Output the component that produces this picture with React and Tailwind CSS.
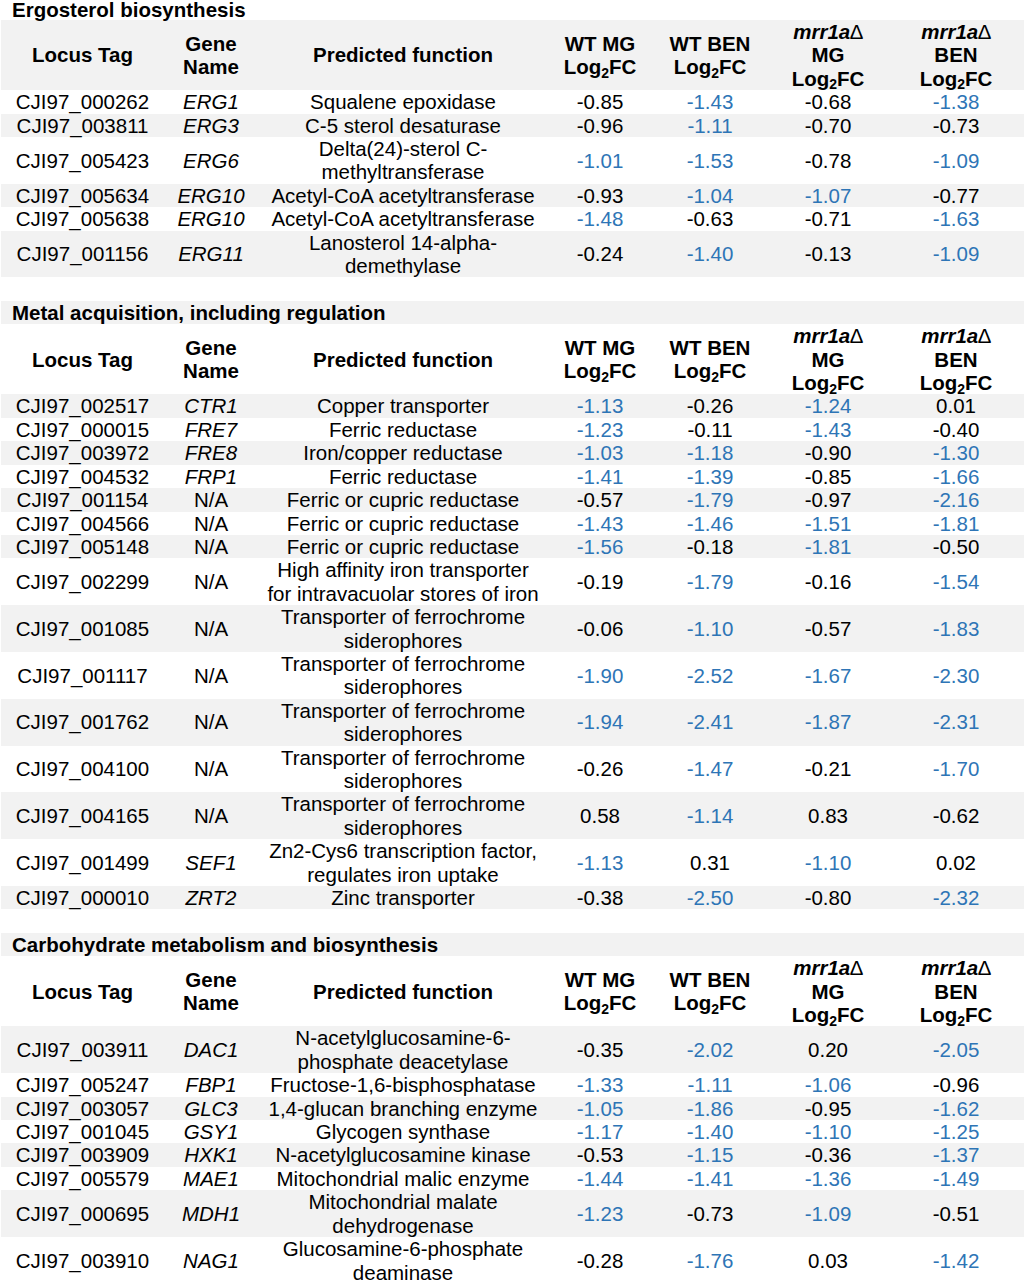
import React from 'react';

const sections = [
  {
    title: 'Ergosterol biosynthesis',
    rows: [
      ['CJI97_000262', 'ERG1', ['Squalene epoxidase'], '-0.85', '-1.43', '-0.68', '-1.38'],
      ['CJI97_003811', 'ERG3', ['C-5 sterol desaturase'], '-0.96', '-1.11', '-0.70', '-0.73'],
      ['CJI97_005423', 'ERG6', ['Delta(24)-sterol C-', 'methyltransferase'], '-1.01', '-1.53', '-0.78', '-1.09'],
      ['CJI97_005634', 'ERG10', ['Acetyl-CoA acetyltransferase'], '-0.93', '-1.04', '-1.07', '-0.77'],
      ['CJI97_005638', 'ERG10', ['Acetyl-CoA acetyltransferase'], '-1.48', '-0.63', '-0.71', '-1.63'],
      ['CJI97_001156', 'ERG11', ['Lanosterol 14-alpha-', 'demethylase'], '-0.24', '-1.40', '-0.13', '-1.09'],
    ],
  },
  {
    title: 'Metal acquisition, including regulation',
    rows: [
      ['CJI97_002517', 'CTR1', ['Copper transporter'], '-1.13', '-0.26', '-1.24', '0.01'],
      ['CJI97_000015', 'FRE7', ['Ferric reductase'], '-1.23', '-0.11', '-1.43', '-0.40'],
      ['CJI97_003972', 'FRE8', ['Iron/copper reductase'], '-1.03', '-1.18', '-0.90', '-1.30'],
      ['CJI97_004532', 'FRP1', ['Ferric reductase'], '-1.41', '-1.39', '-0.85', '-1.66'],
      ['CJI97_001154', null, ['Ferric or cupric reductase'], '-0.57', '-1.79', '-0.97', '-2.16'],
      ['CJI97_004566', null, ['Ferric or cupric reductase'], '-1.43', '-1.46', '-1.51', '-1.81'],
      ['CJI97_005148', null, ['Ferric or cupric reductase'], '-1.56', '-0.18', '-1.81', '-0.50'],
      ['CJI97_002299', null, ['High affinity iron transporter', 'for intravacuolar stores of iron'], '-0.19', '-1.79', '-0.16', '-1.54'],
      ['CJI97_001085', null, ['Transporter of ferrochrome', 'siderophores'], '-0.06', '-1.10', '-0.57', '-1.83'],
      ['CJI97_001117', null, ['Transporter of ferrochrome', 'siderophores'], '-1.90', '-2.52', '-1.67', '-2.30'],
      ['CJI97_001762', null, ['Transporter of ferrochrome', 'siderophores'], '-1.94', '-2.41', '-1.87', '-2.31'],
      ['CJI97_004100', null, ['Transporter of ferrochrome', 'siderophores'], '-0.26', '-1.47', '-0.21', '-1.70'],
      ['CJI97_004165', null, ['Transporter of ferrochrome', 'siderophores'], '0.58', '-1.14', '0.83', '-0.62'],
      ['CJI97_001499', 'SEF1', ['Zn2-Cys6 transcription factor,', 'regulates iron uptake'], '-1.13', '0.31', '-1.10', '0.02'],
      ['CJI97_000010', 'ZRT2', ['Zinc transporter'], '-0.38', '-2.50', '-0.80', '-2.32'],
    ],
  },
  {
    title: 'Carbohydrate metabolism and biosynthesis',
    rows: [
      ['CJI97_003911', 'DAC1', ['N-acetylglucosamine-6-', 'phosphate deacetylase'], '-0.35', '-2.02', '0.20', '-2.05'],
      ['CJI97_005247', 'FBP1', ['Fructose-1,6-bisphosphatase'], '-1.33', '-1.11', '-1.06', '-0.96'],
      ['CJI97_003057', 'GLC3', ['1,4-glucan branching enzyme'], '-1.05', '-1.86', '-0.95', '-1.62'],
      ['CJI97_001045', 'GSY1', ['Glycogen synthase'], '-1.17', '-1.40', '-1.10', '-1.25'],
      ['CJI97_003909', 'HXK1', ['N-acetylglucosamine kinase'], '-0.53', '-1.15', '-0.36', '-1.37'],
      ['CJI97_005579', 'MAE1', ['Mitochondrial malic enzyme'], '-1.44', '-1.41', '-1.36', '-1.49'],
      ['CJI97_000695', 'MDH1', ['Mitochondrial malate', 'dehydrogenase'], '-1.23', '-0.73', '-1.09', '-0.51'],
      ['CJI97_003910', 'NAG1', ['Glucosamine-6-phosphate', 'deaminase'], '-0.28', '-1.76', '0.03', '-1.42'],
    ],
  },
];

const cols = 'grid grid-cols-[163px_94px_290px_104px_116px_120px_136px]';
const cell = 'flex flex-col items-center justify-center text-center whitespace-nowrap';

const Log2FC = () => (
  <span>
    Log<sub className="text-[14px]">2</sub>FC
  </span>
);

const Mrr = () => (
  <span>
    <span className="italic">mrr1a</span>
    <span className="font-normal not-italic">∆</span>
  </span>
);

const HeaderRow = ({ shade }) => (
  <div className={`${cols} font-bold ${shade}`}>
    <div className={cell}>Locus Tag</div>
    <div className={cell}>
      <span>Gene</span>
      <span>Name</span>
    </div>
    <div className={cell}>Predicted function</div>
    <div className={cell}>
      <span>WT MG</span>
      <Log2FC />
    </div>
    <div className={cell}>
      <span>WT BEN</span>
      <Log2FC />
    </div>
    <div className={cell}>
      <Mrr />
      <span>MG</span>
      <Log2FC />
    </div>
    <div className={cell}>
      <Mrr />
      <span>BEN</span>
      <Log2FC />
    </div>
  </div>
);

const Value = ({ v }) => (
  <div className={`${cell} ${parseFloat(v) <= -1 ? 'text-[#2e75b6]' : 'text-black'}`}>{v}</div>
);

const DataRow = ({ row, shade }) => {
  const [tag, gene, fn, a, b, c, d] = row;
  return (
    <div className={`${cols} ${shade}`}>
      <div className={cell}>{tag}</div>
      <div className={cell}>{gene ? <span className="italic">{gene}</span> : 'N/A'}</div>
      <div className={cell}>
        {fn.map((line, i) => (
          <span key={i}>{line}</span>
        ))}
      </div>
      <Value v={a} />
      <Value v={b} />
      <Value v={c} />
      <Value v={d} />
    </div>
  );
};

export default function App() {
  // flatten everything so the banding alternates straight through the sections
  const lines = [];
  sections.forEach((s, si) => {
    if (si > 0) lines.push({ type: 'blank' });
    lines.push({ type: 'title', text: s.title, first: si === 0 });
    lines.push({ type: 'header' });
    s.rows.forEach((r) => lines.push({ type: 'row', row: r }));
  });

  return (
    <div className="w-[1028px] h-[1280px] overflow-hidden bg-white pl-[1px] font-['Liberation_Sans',Arial,sans-serif] text-[20.5px] leading-[23.4px] text-black">
      <div className="w-[1023px]">
        {lines.map((l, i) => {
          const shade = i % 2 === 1 ? 'bg-[#f2f2f2]' : 'bg-white';
          if (l.type === 'blank') return <div key={i} className={`h-[23.4px] ${shade}`} />;
          if (l.type === 'title')
            return (
              <div
                key={i}
                className={`pl-[11px] font-bold ${shade} ${l.first ? 'h-[20px] leading-[20px]' : ''}`}
              >
                {l.text}
              </div>
            );
          if (l.type === 'header') return <HeaderRow key={i} shade={shade} />;
          return <DataRow key={i} row={l.row} shade={shade} />;
        })}
      </div>
    </div>
  );
}
